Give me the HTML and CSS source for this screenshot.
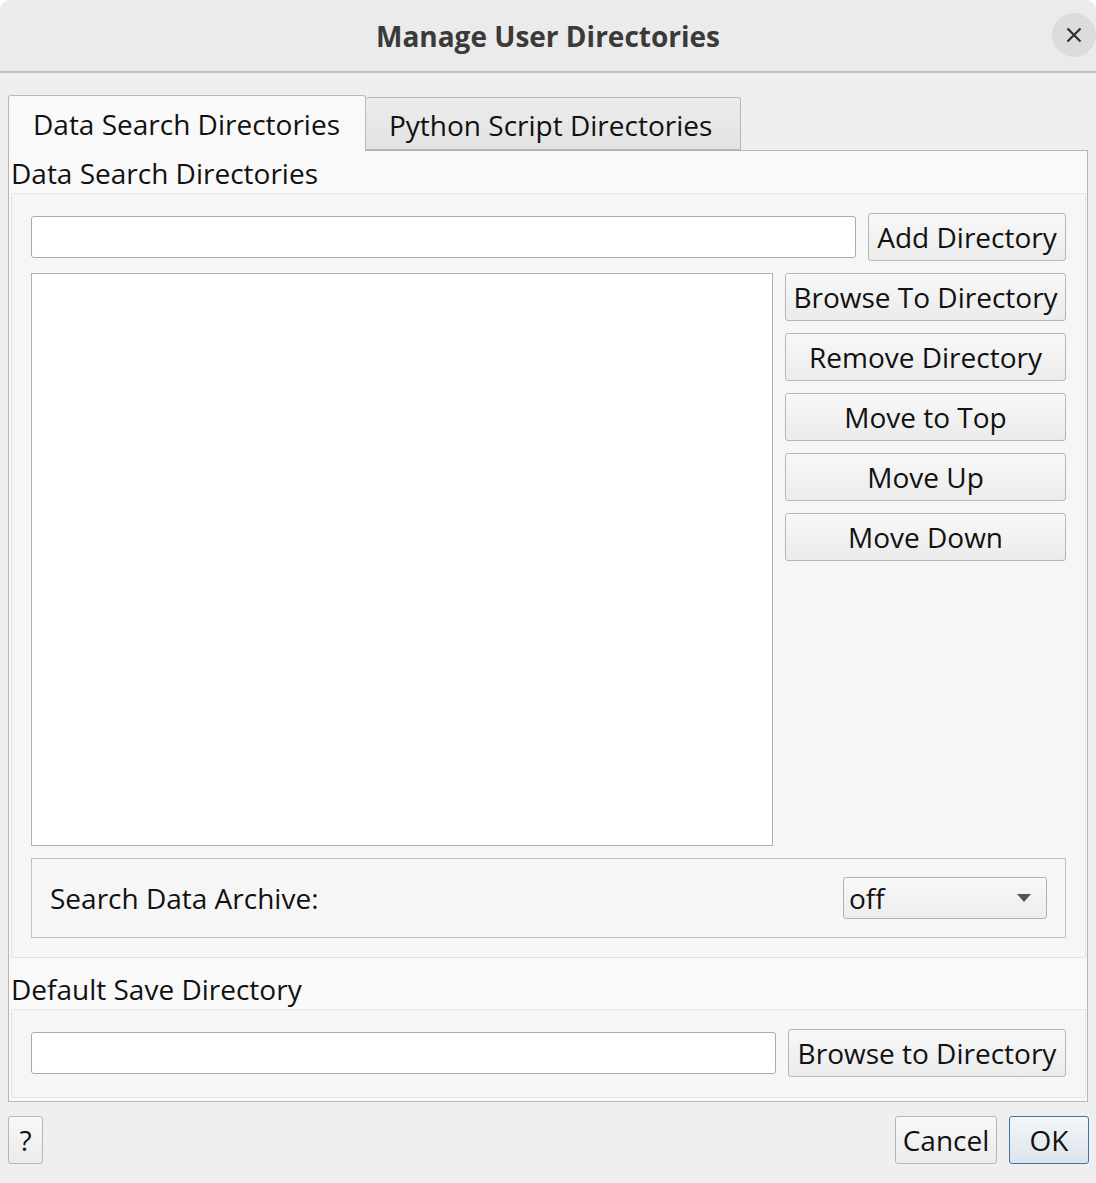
FILE: index.html
```html
<!DOCTYPE html>
<html lang="en">
<head>
<meta charset="utf-8">
<title>Manage User Directories</title>
<link rel="stylesheet" href="styles.css">
</head>
<body>
<div class="window">
  <header class="titlebar">
    <span></span>
    <h1 class="title">Manage User Directories</h1>
    <button class="close" aria-label="Close">
      <svg width="16" height="16" viewBox="0 0 16 16"><path d="M1.5 1.5 L14.5 14.5 M14.5 1.5 L1.5 14.5" stroke="#2e2e2e" stroke-width="2.2" fill="none"/></svg>
    </button>
  </header>

  <main class="content">
    <div class="tabs">
      <div class="tab active">Data Search Directories</div>
      <div class="tab">Python Script Directories</div>
    </div>
    <section class="pane">
      <div class="section-label first">Data Search Directories</div>
      <div class="group search-group">
        <div class="row">
          <input class="field grow" type="text">
          <button class="btn add-btn">Add Directory</button>
        </div>
        <div class="row list-row">
          <div class="list"></div>
          <div class="btn-col">
            <button class="btn">Browse To Directory</button>
            <button class="btn">Remove Directory</button>
            <button class="btn">Move to Top</button>
            <button class="btn">Move Up</button>
            <button class="btn">Move Down</button>
          </div>
        </div>
        <div class="archive">
          <span class="archive-label">Search Data Archive:</span>
          <div class="combo">
            <span>off</span>
            <svg width="14" height="8" viewBox="0 0 14 8"><path d="M0 0 H14 L7 8 Z" fill="#555"/></svg>
          </div>
        </div>
      </div>
      <div class="section-label second">Default Save Directory</div>
      <div class="group save-group">
        <div class="row save-row">
          <input class="field grow" type="text">
          <button class="btn save-btn">Browse to Directory</button>
        </div>
      </div>
    </section>
  </main>

  <footer class="footer">
    <button class="btn help">?</button>
    <div class="footer-right">
      <button class="btn cancel">Cancel</button>
      <button class="btn ok">OK</button>
    </div>
  </footer>
</div>
</body>
</html>
```

FILE: styles.css
```css
* { box-sizing: border-box; }
html { background: #ffffff; }
body {
  margin: 0;
  width: 1096px;
  height: 1183px;
  overflow: hidden;
  font-family: "Open Sans", "Noto Sans", "DejaVu Sans", sans-serif;
  color: #111;
}
.window {
  width: 1096px;
  height: 1183px;
  background: #efefef;
  border-radius: 10px 10px 0 0;
  overflow: hidden;
  display: flex;
  flex-direction: column;
}
.titlebar {
  height: 73px;
  background: #ebebeb;
  border-bottom: 2px solid #c0c0c0;
  display: grid;
  grid-template-columns: 1fr auto 1fr;
  align-items: center;
}
.title {
  margin: 0;
  font-size: 28px;
  font-weight: 700;
  color: #3a3a3a;
  letter-spacing: 0;
  padding-top: 0;
}
.close {
  justify-self: end;
  width: 44px;
  height: 44px;
  border-radius: 50%;
  border: none;
  background: #dcdcdc;
  display: flex;
  align-items: center;
  justify-content: center;
  padding: 0;
  margin-right: 0;
  margin-top: -2px;
}
.content {
  padding: 22px 8px 0 8px;
}
.tabs {
  display: flex;
  align-items: flex-end;
  height: 55px;
  position: relative;
  z-index: 1;
}
.tab {
  font-size: 28px;
  line-height: 1;
  display: flex;
  align-items: center;
  border: 1px solid #b8b8b8;
  border-bottom: none;
  border-radius: 3px 3px 0 0;
}
.tab.active {
  width: 358px;
  height: 56px;
  margin-bottom: -1px;
  background: #f9f9f9;
  padding-left: 24px;
  padding-top: 1px;
}
.tab:not(.active) {
  width: 375px;
  height: 53px;
  background: linear-gradient(#ececec, #e3e3e3);
  padding-left: 23px;
  border-left: none;
  border-bottom: 1px solid #b8b8b8;
  margin-bottom: 0;
  padding-top: 3px;
}
.pane {
  height: 952px;
  background: #f9f9f9;
  border: 1px solid #b5b5b5;
  padding: 0 1px 0 2px;
  display: flex;
  flex-direction: column;
}
.section-label {
  font-size: 28px;
  line-height: 37px;
  padding-left: 0;
}
.section-label.first { margin-top: 4px; margin-bottom: 1px; }
.section-label.second { margin-top: 13px; margin-bottom: 1px; }
.group {
  background: #f6f6f6;
  border: 1px solid #e3e3e3;
  border-radius: 2px;
  padding: 19px 19px 19px 19px;
  display: flex;
  flex-direction: column;
  gap: 12px;
}
.row {
  display: flex;
  align-items: center;
  gap: 12px;
}
.grow { flex: 1; }
.field {
  height: 42px;
  background: #fff;
  border: 1px solid #ababab;
  border-radius: 3px;
  font: inherit;
  margin: 0;
}
.btn {
  height: 48px;
  font-family: inherit;
  font-size: 28px;
  color: #111;
  background: linear-gradient(#f8f8f8, #ebebeb);
  border: 1px solid #b6b6b6;
  border-radius: 3px;
  padding: 0 4px;
  margin: 0;
  white-space: nowrap;
  line-height: 1;
}
.add-btn { width: 198px; }
.list-row { align-items: flex-start; }
.list {
  width: 742px;
  height: 573px;
  background: #fff;
  border: 1px solid #b0b0b0;
}
.btn-col {
  flex: 1;
  display: flex;
  flex-direction: column;
  gap: 12px;
}
.btn-col .btn { width: 100%; }
.archive {
  height: 80px;
  border: 1px solid #c2c2c2;
  display: flex;
  align-items: center;
  justify-content: space-between;
  padding: 0 18px;
}
.archive-label { font-size: 28px; }
.combo {
  width: 204px;
  height: 42px;
  border: 1px solid #b2b2b2;
  border-radius: 3px;
  background: linear-gradient(#f9f9f9, #ececec);
  display: flex;
  align-items: center;
  justify-content: space-between;
  padding: 0 15px 0 5px;
  font-size: 28px;
}
.save-group { padding: 19px 19px 20px 19px; }
.save-btn { width: 278px; }
.footer {
  display: flex;
  justify-content: space-between;
  align-items: center;
  padding: 14px 7px 0 8px;
}
.help { width: 35px; padding: 0; }
.footer-right { display: flex; gap: 12px; }
.cancel { width: 102px; padding: 0; }
.ok {
  width: 80px;
  padding: 0;
  border-color: #3f76a8;
  background: linear-gradient(#f4f6f8, #dce4ec);
}
```
